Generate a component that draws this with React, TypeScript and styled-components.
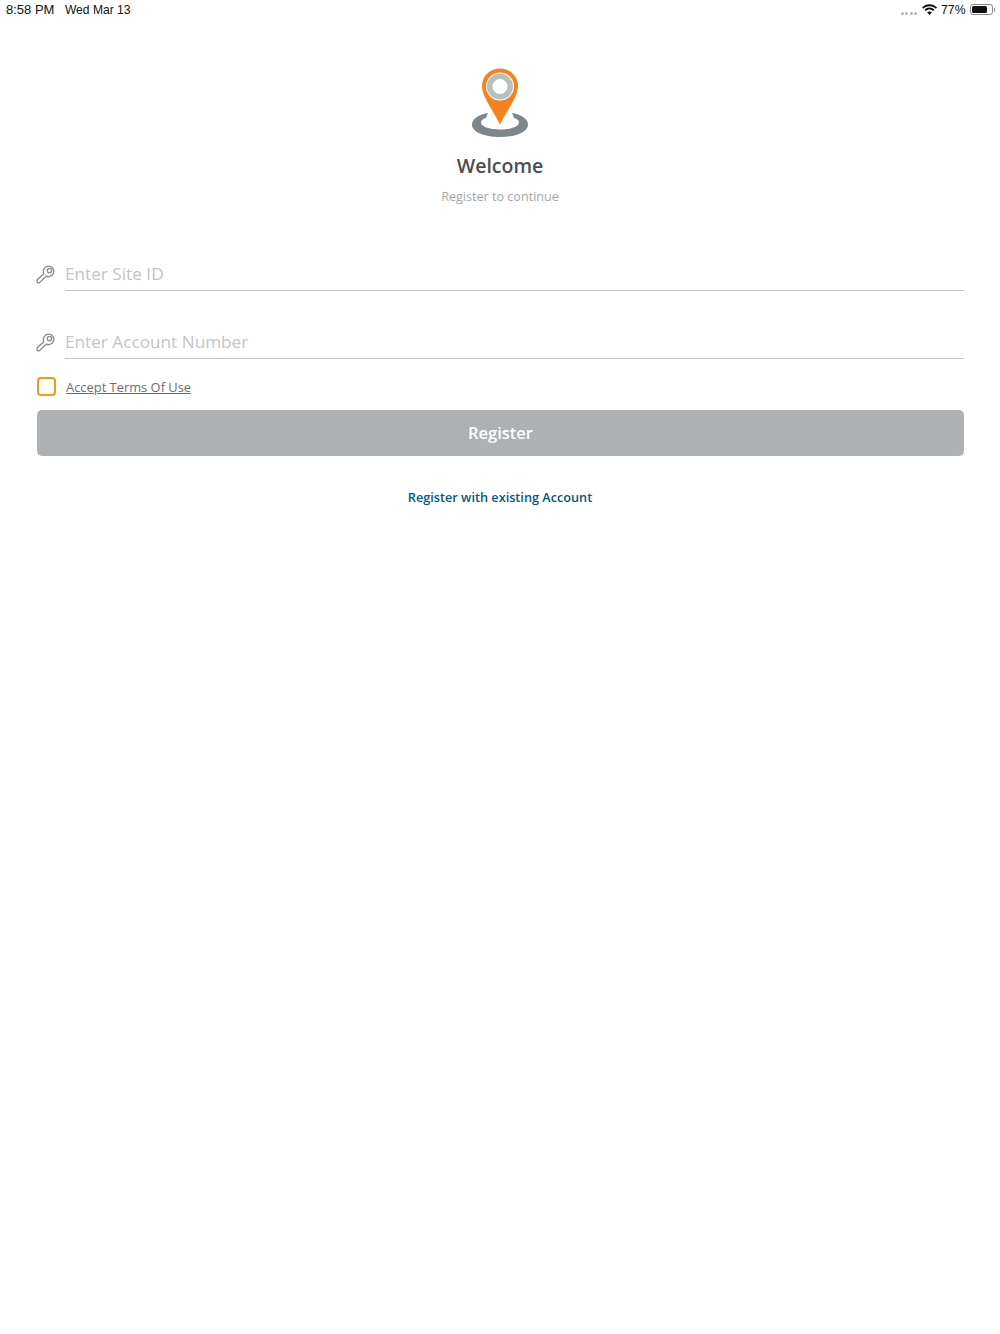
import React from 'react';
import styled, {createGlobalStyle} from "styled-components";

const GlobalStyle = createGlobalStyle`
    html, body {
        margin: 0;
        padding: 0;
        background: #ffffff;
    }
    * {
        box-sizing: border-box;
    }
`

const KeyIcon = () => (
    <svg width="19" height="19" viewBox="0 0 20 20" fill="none" stroke="#8a8d8f" strokeWidth="1.4">
        <path d="M8.2 9.2 L1.2 15.6 V18.4 L3.4 18.8 L10.6 11.8 C12.4 12.6 15 12.4 16.8 10.8 C19.4 8.4 19.4 4.8 17.2 2.8 C15 0.6 11.2 0.8 9.2 3 C7.6 4.8 7.4 7.2 8.2 9.2 Z" strokeLinejoin="round"/>
        <circle cx="14.2" cy="5.8" r="2.3"/>
    </svg>
);

const PinLogo = () => (
    <svg width="58" height="70" viewBox="0 0 58 70">
        <path d="M17 45 C7 47 1 51 1 56.5 C1 64 13 69 29 69 C45 69 57 64 57 56.5 C57 51 51 47 41 45 L43 50 C46.5 51 48 52.5 48 54.5 C48 58.5 40 61.5 29 61.5 C18 61.5 10 58.5 10 54.5 C10 52.5 11.5 51 15 50 Z" fill="#7c868b"/>
        <path d="M29 0.5 C18.5 0.5 11 8.5 11 18 C11 25.5 16 33.5 20 40.5 C23 46 26.5 51 29 56.5 C31.5 51 35 46 38 40.5 C42 33.5 47 25.5 47 18 C47 8.5 39.5 0.5 29 0.5 Z" fill="#f58220"/>
        <circle cx="29" cy="18.5" r="14" fill="#ffffff"/>
        <circle cx="29" cy="18.5" r="10.25" fill="none" stroke="#b9bec1" strokeWidth="5.5"/>
    </svg>
);

const WifiIcon = () => (
    <svg width="15" height="11" viewBox="0 0 15 11" fill="#111111">
        <path d="M7.5 2.2 C10 2.2 12.2 3.2 13.8 4.8 L15 3.5 C13 1.4 10.4 0.2 7.5 0.2 C4.6 0.2 2 1.4 0 3.5 L1.2 4.8 C2.8 3.2 5 2.2 7.5 2.2 Z"/>
        <path d="M7.5 5.4 C9 5.4 10.3 6 11.3 7 L12.5 5.7 C11.2 4.4 9.4 3.6 7.5 3.6 C5.6 3.6 3.8 4.4 2.5 5.7 L3.7 7 C4.7 6 6 5.4 7.5 5.4 Z"/>
        <path d="M7.5 7.4 C6.6 7.4 5.8 7.8 5.1 8.4 L7.5 11 L9.9 8.4 C9.2 7.8 8.4 7.4 7.5 7.4 Z"/>
    </svg>
);

const App = () => {
    return (
        <Page>
            <GlobalStyle/>
            <StatusBar>
                <StatusGroup>
                    <StatusText>8:58 PM</StatusText>
                    <StatusDate>Wed Mar 13</StatusDate>
                </StatusGroup>
                <StatusRight>
                    <SignalDots>
                        <SignalDot/><SignalDot/><SignalDot/><SignalDot/>
                    </SignalDots>
                    <WifiIcon/>
                    <StatusPercent>77%</StatusPercent>
                    <Battery>
                        <BatteryLevel/>
                    </Battery>
                    <BatteryCap/>
                </StatusRight>
            </StatusBar>

            <Header>
                <PinLogo/>
                <Title>Welcome</Title>
                <Subtitle>Register to continue</Subtitle>
            </Header>

            <Form>
                <Field>
                    <KeyIcon/>
                    <Placeholder>Enter Site ID</Placeholder>
                </Field>
                <Field>
                    <KeyIcon/>
                    <Placeholder>Enter Account Number</Placeholder>
                </Field>
                <TermsRow>
                    <Checkbox/>
                    <TermsLink>Accept Terms Of Use</TermsLink>
                </TermsRow>
                <RegisterButton>Register</RegisterButton>
                <ExistingLink>Register with existing Account</ExistingLink>
            </Form>
        </Page>
    );
};

export default App;

const Page = styled.div`
    width: 1000px;
    height: 1334px;
    background: #ffffff;
    overflow: hidden;
    font-family: "Open Sans", sans-serif;
`
const StatusBar = styled.div`
    height: 19px;
    padding: 0 5px 0 6px;
    display: flex;
    justify-content: space-between;
    align-items: center;
`
const StatusGroup = styled.div`
    display: flex;
    align-items: center;
    gap: 10.5px;
`
const StatusText = styled.span`
    font-family: "Liberation Sans", Arial, sans-serif;
    font-size: 13px;
    color: #111111;
`
const StatusDate = styled(StatusText)`
    font-size: 12.1px;
`
const StatusPercent = styled(StatusText)`
    margin-left: 4px;
    font-size: 12.2px;
`
const StatusRight = styled.div`
    display: flex;
    align-items: center;
`
const SignalDots = styled.div`
    display: flex;
    gap: 1.5px;
    margin: 7px 5px 0 0;
`
const SignalDot = styled.span`
    width: 3px;
    height: 3px;
    border-radius: 50%;
    background: #b5b5b5;
`
const Battery = styled.div`
    width: 23px;
    height: 11px;
    margin-left: 4px;
    padding: 1px;
    border: 1px solid #8a8a8a;
    border-radius: 3px;
`
const BatteryLevel = styled.div`
    width: 15px;
    height: 100%;
    background: #111111;
    border-radius: 1.5px;
`
const BatteryCap = styled.div`
    width: 1.5px;
    height: 4px;
    margin-left: 1px;
    background: #8a8a8a;
    border-radius: 0 1px 1px 0;
`
const Header = styled.div`
    display: flex;
    flex-direction: column;
    align-items: center;
    padding-top: 49px;
`
const Title = styled.h1`
    margin: 14px 0 0;
    font-size: 19.5px;
    line-height: 28px;
    font-weight: 600;
    color: #4d4d4f;
`
const Subtitle = styled.p`
    margin: 8px 0 0;
    font-size: 12.6px;
    line-height: 18px;
    color: #a3a6a8;
`
const Form = styled.div`
    display: flex;
    flex-direction: column;
    padding: 0 36px;
    margin-top: 37px;
`
const Field = styled.div`
    display: flex;
    align-items: flex-end;
    height: 48px;
    gap: 10px;
    margin-bottom: 20px;
    & > svg {
        flex-shrink: 0;
        margin-bottom: 7px;
    }
`
const Placeholder = styled.div`
    flex: 1;
    height: 48px;
    padding-top: 19px;
    font-size: 17.2px;
    line-height: 24px;
    color: #c2c4c6;
    border-bottom: 1px solid #c4c6c8;
`
const TermsRow = styled.div`
    display: flex;
    align-items: center;
    gap: 10.5px;
    margin: -2px 0 0 1px;
`
const Checkbox = styled.div`
    width: 18.5px;
    height: 19px;
    border: 2px solid #f7941d;
    border-radius: 4px;
`
const TermsLink = styled.a`
    font-size: 12.9px;
    color: #6d6e71;
    text-decoration: underline;
`
const RegisterButton = styled.button`
    height: 46px;
    margin: 14px 0 0 1px;
    padding-bottom: 2px;
    border: none;
    border-radius: 5px;
    background: #adb1b4;
    color: #ffffff;
    font-family: "Open Sans", sans-serif;
    font-size: 16.5px;
    font-weight: 600;
`
const ExistingLink = styled.a`
    margin-top: 32px;
    text-align: center;
    font-size: 12.7px;
    line-height: 18px;
    font-weight: 600;
    color: #005a82;
`
